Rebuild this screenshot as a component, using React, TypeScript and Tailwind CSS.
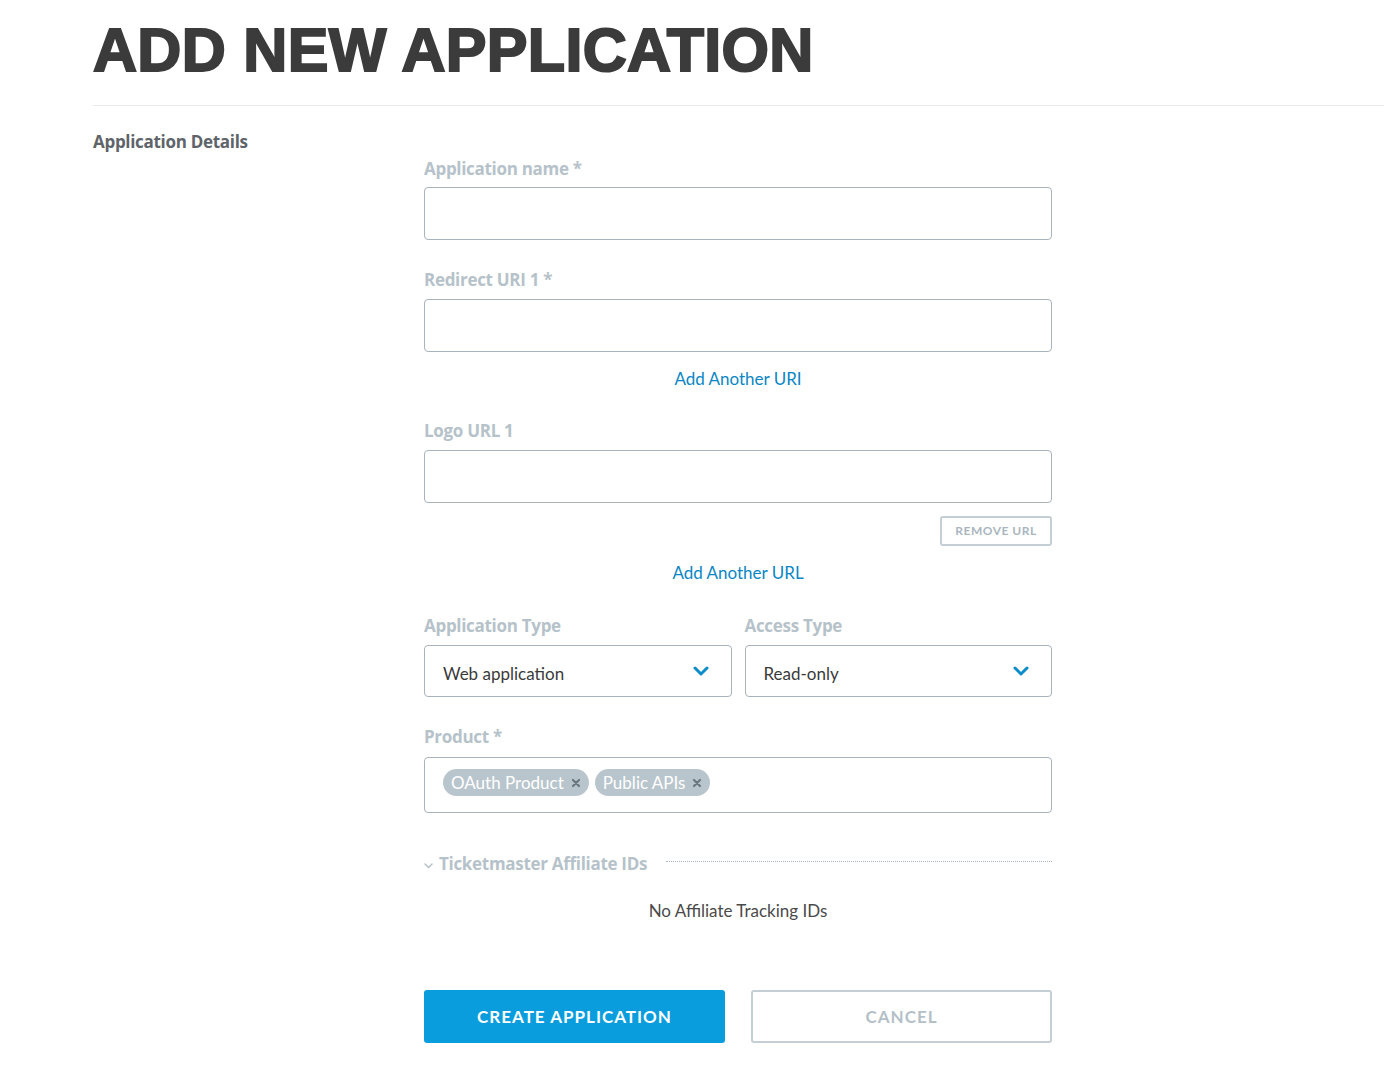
import React from "react";

const labelCls =
  "block text-[17px] leading-6 font-bold text-[#b6c2ca] font-['Open_Sans',sans-serif] tracking-[-0.3px]";
const inputCls =
  "block w-full h-[53px] rounded-[4px] border border-[#a9b3bb] bg-white";

function Chevron() {
  return (
    <svg width="16" height="10" viewBox="0 0 16 10" fill="none">
      <path d="M2 2l6 6 6-6" stroke="#0a8cc9" strokeWidth="3" strokeLinecap="round" strokeLinejoin="round" />
    </svg>
  );
}

function Chip({ label }: { label: string }) {
  return (
    <span className="inline-flex items-center h-[27px] rounded-full bg-[#b9c5cd] pl-[8px] pr-[8px] text-white text-[17px] font-['Lato',sans-serif]">
      {label}
      <svg className="ml-[7px]" width="10" height="10" viewBox="0 0 10 10">
        <path d="M2 2l6 6M8 2l-6 6" stroke="#6b7780" strokeWidth="2.2" strokeLinecap="round" />
      </svg>
    </span>
  );
}

export default function App() {
  return (
    <div className="min-h-[1083px] bg-white pl-[93px] pr-[16px] font-['Lato',sans-serif]">
      <h1 className="pt-[20px] text-[61px] leading-[61px] font-bold text-[#3b3b3b] font-['Liberation_Sans',Arial,sans-serif] tracking-[0.3px] [-webkit-text-stroke:2px_#3b3b3b]">
        ADD NEW APPLICATION
      </h1>
      <div className="mt-[24px] h-px bg-[#e6eaed]" />
      <div className="flex items-start mt-[24px]">
        <div className="w-[331px] shrink-0 text-[17px] leading-6 font-bold text-[#5e6469] font-['Open_Sans',sans-serif] tracking-[-0.3px]">
          Application Details
        </div>
        <div className="w-[628px] pt-[27px] pb-[40px]">
          <label className={labelCls}>Application name *</label>
          <div className={inputCls + " mt-[6px]"} />

          <label className={labelCls + " mt-[28px]"}>Redirect URI 1 *</label>
          <div className={inputCls + " mt-[7px] h-[52px]"} />

          <div className="mt-[15px] text-center text-[17px] leading-6 text-[#0a86c4]">Add Another URI</div>

          <label className={labelCls + " mt-[28px]"}>Logo URL 1</label>
          <div className={inputCls + " mt-[7px] h-[52px]"} />

          <div className="mt-[13px] flex justify-end">
            <button className="h-[30px] w-[112px] rounded-[3px] border-2 border-[#c4ced5] text-[12px] font-bold tracking-[0.5px] text-[#a9b6bf]">
              REMOVE URL
            </button>
          </div>

          <div className="mt-[15px] text-center text-[17px] leading-6 text-[#0a86c4]">Add Another URL</div>

          <div className="mt-[29px] grid grid-cols-2 gap-x-[13px]">
            <div>
              <label className={labelCls}>Application Type</label>
              <div className="mt-[7px] h-[52px] rounded-[4px] border border-[#a9b3bb] flex items-center justify-between pl-[18px] pr-[22px] text-[17px] text-[#3a3a3a]">
                <span className="pt-[5px]">Web application</span>
                <Chevron />
              </div>
            </div>
            <div>
              <label className={labelCls}>Access Type</label>
              <div className="mt-[7px] h-[52px] rounded-[4px] border border-[#a9b3bb] flex items-center justify-between pl-[18px] pr-[22px] text-[17px] text-[#3a3a3a]">
                <span className="pt-[5px]">Read-only</span>
                <Chevron />
              </div>
            </div>
          </div>

          <label className={labelCls + " mt-[28px]"}>Product *</label>
          <div className="mt-[8px] h-[56px] rounded-[4px] border border-[#a9b3bb] flex items-start gap-[6px] pl-[18px] pt-[11px]">
            <Chip label="OAuth Product" />
            <Chip label="Public APIs" />
          </div>

          <div className="mt-[39px] flex items-center">
            <svg className="mr-[6px] mt-[4px]" width="9" height="6" viewBox="0 0 9 6" fill="none">
              <path d="M1 1l3.5 3.5L8 1" stroke="#b6c2ca" strokeWidth="1.5" strokeLinecap="round" />
            </svg>
            <span className="text-[17px] leading-6 font-bold text-[#b6c2ca] font-['Open_Sans',sans-serif] tracking-[-0.3px]">Ticketmaster Affiliate IDs</span>
            <div className="ml-[19px] flex-1 border-t border-dotted border-[#aab5bd] -mt-[6px]" />
          </div>

          <div className="mt-[23px] text-center text-[17px] leading-6 text-[#4a4a4a]">No Affiliate Tracking IDs</div>

          <div className="mt-[67px] flex justify-between">
            <button className="h-[53px] w-[301px] rounded-[3px] bg-[#0a9ddd] text-white text-[17px] font-bold tracking-[1px]">
              CREATE APPLICATION
            </button>
            <button className="h-[53px] w-[301px] rounded-[3px] border-2 border-[#c4ced5] bg-white text-[#b4c0c8] text-[17px] font-bold tracking-[1px]">
              CANCEL
            </button>
          </div>
        </div>
      </div>
    </div>
  );
}
